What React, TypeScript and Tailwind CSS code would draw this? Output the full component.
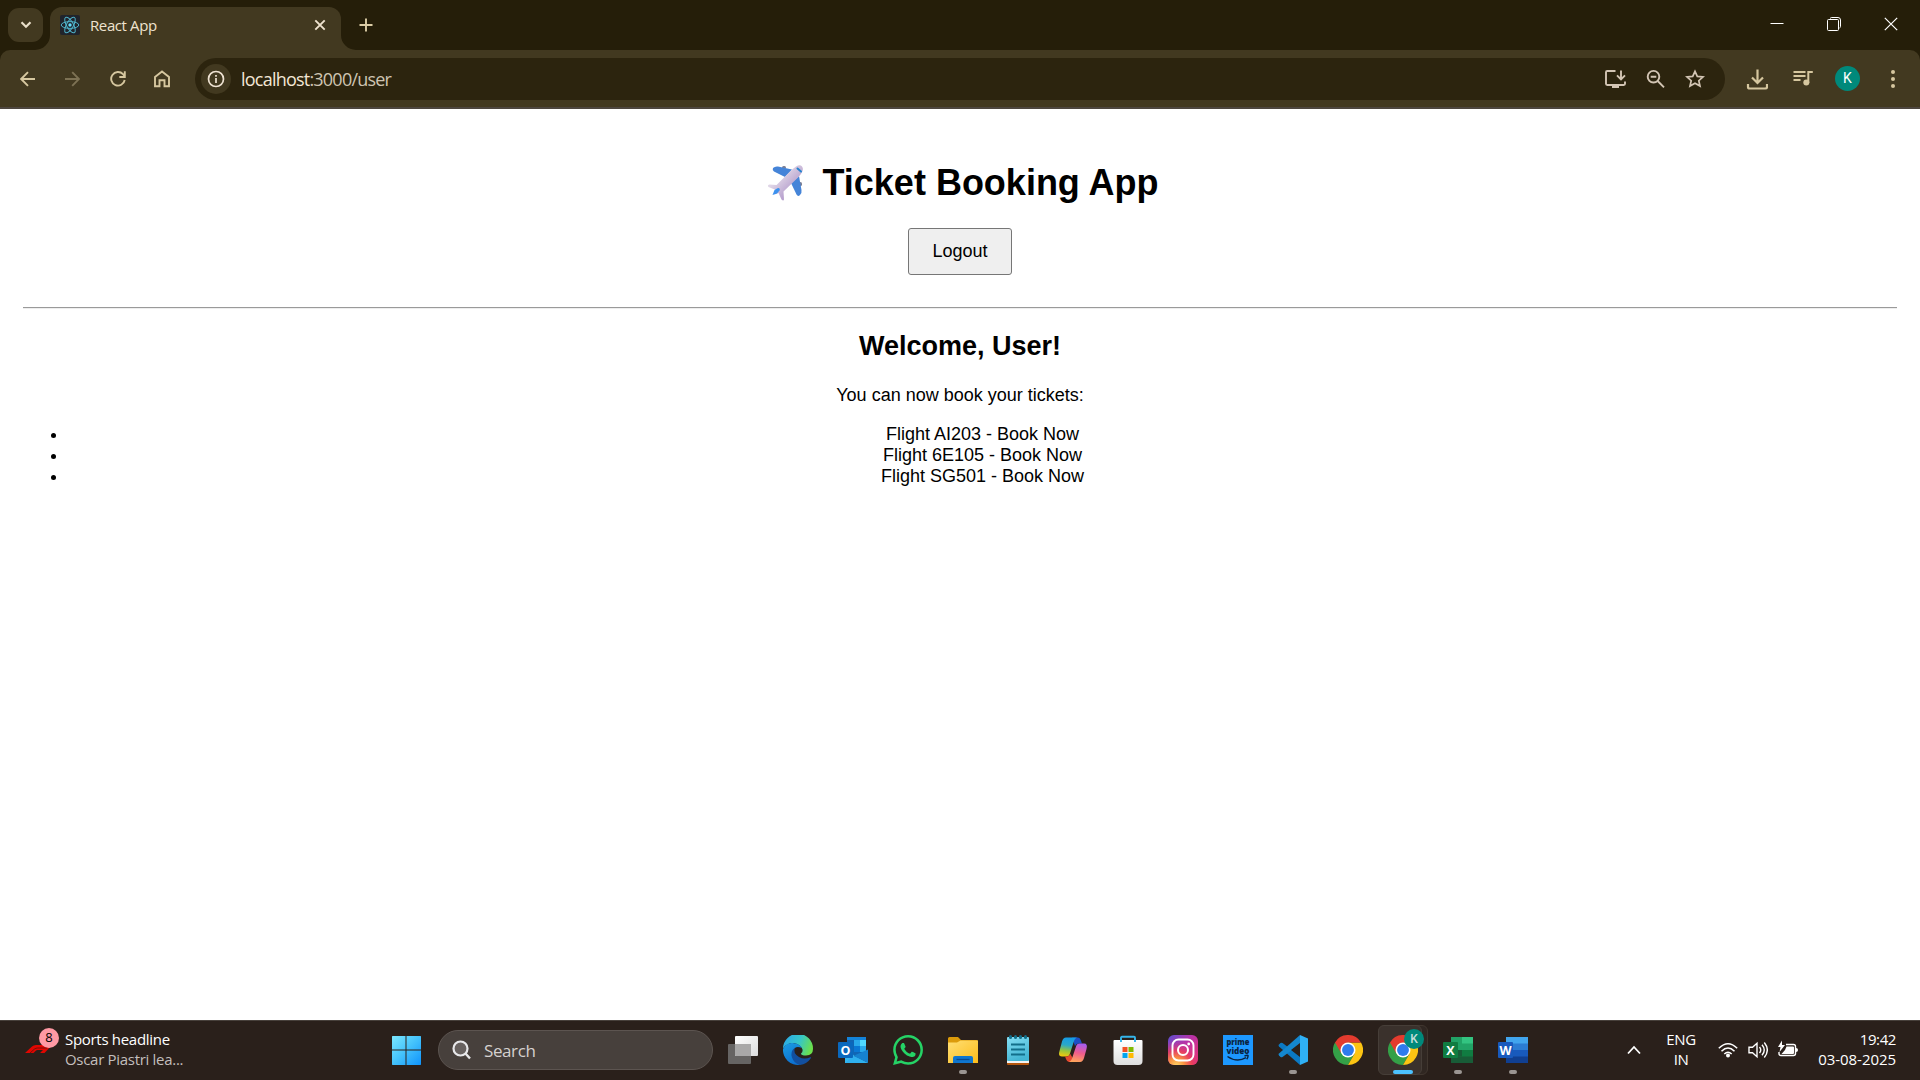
import React from "react";

const segoe = "font-['Open_Sans','Noto_Sans',sans-serif]";

function Svg({ size, children, vb, className = "" }: { size: number; vb?: string; className?: string; children: React.ReactNode }) {
  return (
    <svg width={size} height={size} viewBox={vb ?? "0 0 24 24"} fill="none" className={"block shrink-0 " + className}>
      {children}
    </svg>
  );
}

function ReactLogo() {
  return (
    <Svg size={20} vb="0 0 20 20" className="rounded-[2px] bg-[#20242c]">
      <g stroke="#4fb3ca" strokeWidth="1">
        <ellipse cx="10" cy="10" rx="8.8" ry="3.4" />
        <ellipse cx="10" cy="10" rx="8.8" ry="3.4" transform="rotate(60 10 10)" />
        <ellipse cx="10" cy="10" rx="8.8" ry="3.4" transform="rotate(120 10 10)" />
      </g>
      <circle cx="10" cy="10" r="1.7" fill="#61dafb" />
    </Svg>
  );
}

function TabStrip() {
  return (
    <div className="flex h-[50px] items-stretch bg-[#251e09] pl-2">
      <div className="mt-2 flex h-[34px] w-[35px] items-center justify-center rounded-[11px] bg-[#423920]">
        <Svg size={12} vb="0 0 12 12">
          <path d="M1.500 3.200 6 7.700l4.500-4.500" stroke="#e9dfc9" strokeWidth="2.200" />
        </Svg>
      </div>
      <div className="relative mt-[7px] ml-[7px] flex w-[291px] items-center rounded-t-[12px] bg-[#423920] pb-[1px] pl-[10px]">
        <svg width="15" height="15" className="absolute -left-[15px] bottom-0">
          <path d="M15 0V15H0A15 15 0 0 0 15 0Z" fill="#423920" />
        </svg>
        <svg width="15" height="15" className="absolute -right-[15px] bottom-0">
          <path d="M0 0V15H15A15 15 0 0 1 0 0Z" fill="#423920" />
        </svg>
        <div className="-mt-[6px]"><ReactLogo /></div>
        <div className={"-mt-[6px] ml-[10px] text-[15px] leading-5 tracking-[-0.4px] text-[#efe3cf] " + segoe}>React App</div>
        <div className="-mt-[6px] mr-[15px] ml-auto">
          <Svg size={12} vb="0 0 12 12">
            <path d="M1.300 1.300l9.400 9.400M10.700 1.300l-9.400 9.400" stroke="#efe3cf" strokeWidth="1.900" />
          </Svg>
        </div>
      </div>
      <div className="mt-[18px] ml-[18px]">
        <Svg size={14} vb="0 0 14 14">
          <path d="M7 .5v13M.5 7h13" stroke="#dccda6" strokeWidth="1.900" />
        </Svg>
      </div>
      <div className="ml-auto flex h-[50px] pr-px text-white">
        <div className="flex w-[56px] items-center justify-center pb-[2px]"><Svg size={14} vb="0 0 14 14"><path d="M.5 6.500h13" stroke="currentColor" /></Svg></div>
        <div className="flex w-[57px] items-center justify-center pb-[2px]">
          <Svg size={14} vb="0 0 14 14">
            <path d="M3.500 1.500V1Q3.500.500 4.500.500H11Q13.500.500 13.500 3v6.500q0 1-1 1.500" stroke="currentColor" />
            <rect x=".5" y="2.500" width="11" height="11" rx="1" stroke="currentColor" />
          </Svg>
        </div>
        <div className="flex w-[57px] items-center justify-center pb-[2px]"><Svg size={14} vb="0 0 14 14"><path d="M.8.8l12.400 12.400M13.200.8L.8 13.200" stroke="currentColor" strokeWidth="1.200" /></Svg></div>
      </div>
    </div>
  );
}

function Toolbar() {
  return (
    <div className="bg-[#251e09]">
      <div className="flex h-[57px] items-center rounded-t-[10px] bg-[#423920] text-[#d6c79f]">
        <div className="flex w-[195px] items-center pl-[20px]">
          <Svg size={16} vb="0 0 16 16"><path d="M15 8H2M8 1.200 1.200 8 8 14.800" stroke="currentColor" strokeWidth="1.900" /></Svg>
          <Svg size={16} vb="0 0 16 16" className="ml-[28px] text-[#7d7254]"><path d="M1 8H14.500M8.200 1.200 15 8l-6.800 6.800" stroke="currentColor" strokeWidth="1.900" /></Svg>
          <Svg size={16} vb="0 0 16 16" className="ml-[30px]">
            <path d="M14.700 9A6.800 6.800 0 1 1 13 3.200L14.500 5" stroke="currentColor" strokeWidth="1.900" />
            <path d="M14.800.3V6H9.300" stroke="currentColor" strokeWidth="1.900" />
          </Svg>
          <Svg size={18} vb="0 0 18 18" className="ml-[27px]"><path d="M2 7 9 1.500 16 7v9.300h-4.500v-6h-5v6H2Z" stroke="currentColor" strokeWidth="1.900" /></Svg>
        </div>
        <div className="flex h-[42px] w-[1530px] items-center rounded-full bg-[#2c240e] pl-[6px] text-[#d3c5b4]">
          <div className="flex size-[30px] items-center justify-center rounded-full bg-[#423920] text-[#efe3d3]">
            <Svg size={18} vb="0 0 18 18"><circle cx="9" cy="9" r="7.500" stroke="currentColor" strokeWidth="1.700" /><path d="M9 8v5M9 5v1.800" stroke="currentColor" strokeWidth="1.700" /></Svg>
          </div>
          <div className={"ml-[10px] text-[18px] leading-6 tracking-[-0.78px] text-[#cfc4b2] " + segoe}><span className="text-[#f3e7d5]">localhost</span>:3000/user</div>
          <div className="mr-[20px] ml-auto flex items-center">
            <Svg size={22} vb="0 0 22 22">
              <path d="M11.500 3H3.200Q2 3 2 4.200v11.600Q2 17 3.200 17h16.600q1.200 0 1.200-1.200V13.500" stroke="currentColor" strokeWidth="1.900" />
              <path d="M17 2.500v8M13 7.300l4 4 4-4" stroke="currentColor" strokeWidth="1.900" />
              <path d="M8 17h7v3H8Z" fill="currentColor" />
            </Svg>
            <Svg size={20} vb="0 0 20 20" className="ml-[20px]"><circle cx="7.500" cy="7.700" r="5.800" stroke="currentColor" strokeWidth="1.900" /><path d="M4.700 7.700h5.600M11.700 12l6.300 6.300" stroke="currentColor" strokeWidth="1.900" /></Svg>
            <Svg size={20} vb="0 0 20 20" className="ml-[19px]"><path d="m10 2.300 2.300 5.100 5.700.6-4.200 3.700 1.200 5.400-5-2.900-5 2.900 1.200-5.400L2 8l5.700-.6Z" stroke="currentColor" strokeWidth="1.700" /></Svg>
          </div>
        </div>
        <Svg size={22} vb="0 0 22 22" className="ml-[21px]"><path d="M11.500 1.500V14.500M6 9.500l5.500 5.500L17 9.500M2 16v3Q2 20.500 3.700 20.500h15.600q1.700 0 1.700-1.500V16" stroke="currentColor" strokeWidth="2.200" /></Svg>
        <Svg size={20} vb="0 0 20 20" className="ml-[25px]"><path d="M.5 3h12M.5 7h12M.5 11h7M15.300 14V3h4.500" stroke="currentColor" strokeWidth="2" /><circle cx="13.300" cy="13.500" r="3" fill="currentColor" /></Svg>
        <div className="ml-[22px] flex size-[25px] items-center justify-center rounded-full bg-[#00897b] font-[Roboto,sans-serif] text-[14px] text-white">K</div>
        <Svg size={20} vb="0 0 20 20" className="ml-[23px]"><g fill="currentColor"><circle cx="10" cy="3" r="2" /><circle cx="10" cy="10" r="2" /><circle cx="10" cy="17" r="2" /></g></Svg>
      </div>
      <div className="h-[2px] bg-[#4d463f]" />
    </div>
  );
}

function Airplane() {
  return (
    <svg width="37" height="37" viewBox="0 0 37 37" className="block">
      <defs>
        <linearGradient id="fus" x1=".35" y1=".3" x2=".7" y2=".65"><stop stopColor="#dfd5e6" /><stop offset="1" stopColor="#b9a3cf" /></linearGradient>
      </defs>
      <g fill="#7d7f92"><rect x="15" y="2" width="4" height="3" rx="1.500" /><rect x="32" y="18" width="3" height="4" rx="1.500" /></g>
      <path d="M6 4q2-2 5-1.500L25 5.500l-7 7.500L7 7.500Q5 6 6 4Z" fill="#4584d8" />
      <path d="M33 31q2-2 1.500-5L32 12l-8 7 5.500 11.500Q31 33 33 31Z" fill="#4584d8" />
      <path d="M29 2.500q4-2.500 6 0 2 2.500-.5 6.500-1 2-4 5L16.500 27.500l.5 8q-.5 2-2.500 0l-3-6.500-4 1.500L9 26 1.500 23q-1.500-2 1-2.500l7 .5L22.500 8Q26 4.500 29 2.500Z" fill="url(#fus)" />
      <path d="m5.500 31 2-5 3.500-2q2.500 0 1.500 2.500L10 29.500Z" fill="#3c91ee" />
      <path d="m30.500 4.500 3.500 3" stroke="#2584cf" strokeWidth="2" strokeLinecap="round" />
    </svg>
  );
}

function Page() {
  return (
    <div className="flex h-[911px] flex-col items-center bg-white px-[23px] font-['Liberation_Sans',Arial,sans-serif] text-[18px] leading-[21px] text-black">
      <h1 className="mt-[53px] flex h-[42px] items-center pl-[6px] text-[36px] leading-[42px] font-bold">
        <span className="-mt-[2px] mr-[18px]"><Airplane /></span>
        Ticket Booking App
      </h1>
      <button className="mt-[24px] h-[47px] w-[104px] rounded-[3px] border border-[#767676] bg-[#efefef] text-[18px]">Logout</button>
      <hr className="mt-[32px] h-[2px] w-full border-t border-b border-t-[#9a9a9a] border-b-[#eeeeee]" />
      <h2 className="mt-[22px] text-[27px] leading-[31px] font-bold">Welcome, User!</h2>
      <p className="mt-[23px]">You can now book your tickets:</p>
      <ul className="mt-[18px] w-full list-disc pl-[45px] text-center">
        <li>Flight AI203 - Book Now</li>
        <li>Flight 6E105 - Book Now</li>
        <li>Flight SG501 - Book Now</li>
      </ul>
    </div>
  );
}

function ChromeLogo() {
  return (
    <Svg size={30} vb="0 0 48 48">
      <path d="M3.200 12A24 24 0 0 0 24 48l10.400-18H24Z" fill="#34a047" />
      <path d="M24 12h20.800A24 24 0 0 1 24 48l10.400-18Z" fill="#fcc413" />
      <path d="M3.200 12 13.600 30 24 36 30 26 14 16Z" fill="#34a047" />
      <path d="M3.200 12A24 24 0 0 1 44.800 12H24L13.600 18v12Z" fill="#e33b2e" />
      <circle cx="24" cy="24" r="12" fill="#fff" />
      <circle cx="24" cy="24" r="9.500" fill="#2f7bed" />
    </Svg>
  );
}

function Office({ letter, colors, tile }: { letter: string; colors: string[]; tile: string }) {
  return (
    <Svg size={30} vb="0 0 30 30">
      <rect x="8" y="2" width="22" height="7" fill={colors[0]} />
      <rect x="8" y="8.500" width="22" height="7" fill={colors[1]} />
      <rect x="8" y="15" width="22" height="7" fill={colors[2]} />
      <rect x="8" y="21.500" width="22" height="6.500" fill={colors[3]} />
      {letter === "X" && <path d="M19 2h11v6.500H19Z" fill="#33c481" />}
      {letter === "X" && <path d="M8 15h11v6.500H8Z" fill="#185c37" />}
      <rect y="7" width="15" height="16" rx="1" fill={tile} />
      <text x="7.500" y="19.500" textAnchor="middle" fontSize="12.500" fontWeight="700" fill="#fff" className={segoe}>{letter}</text>
    </Svg>
  );
}

const apps: { icon: React.ReactNode; running?: boolean; active?: boolean }[] = [
  {
    icon: (
      <Svg size={30} vb="0 0 30 30">
        <defs><linearGradient id="tv" x1="0" y1="0" x2="1" y2="1"><stop stopColor="#fff" /><stop offset="1" stopColor="#dcdcdc" /></linearGradient></defs>
        <rect y="9" width="23" height="20" rx="1" fill="#666463" />
        <rect x="7" y="1" width="23" height="20" rx="1" fill="url(#tv)" />
        <path d="M7 9h16v12H8q-1 0-1-1Z" fill="#a9a8a8" />
      </Svg>
    ),
  },
  {
    icon: (
      <Svg size={30} vb="0 0 30 30">
        <defs>
          <linearGradient id="eg" x1="0" y1=".2" x2="1" y2=".5"><stop stopColor="#2aa7e8" /><stop offset=".55" stopColor="#36c6c8" /><stop offset="1" stopColor="#6be04b" /></linearGradient>
          <linearGradient id="eb" x1="0" y1="0" x2=".5" y2="1"><stop stopColor="#1b9de2" /><stop offset="1" stopColor="#0c6fd0" /></linearGradient>
        </defs>
        <path d="M0 13.500A15 15 0 0 1 30 14q0 6-7 6.500-5 0-5-2 2-1.500 1.500-4Q18 9.500 11 8 4 7.500 0 13.500Z" fill="url(#eg)" />
        <path d="M0 14Q3 7.500 9.500 8q7 .5 9.500 5-7-3-9 3-1.500 8 7 13.800A15 15 0 0 1 0 14Z" fill="url(#eb)" />
        <path d="M12 12.500q-5 4-3 10Q11 28.500 17 30q7-1 11-7 .5-1-.7-.7-6 2.700-11.300-.3-6.500-4-4-9.500Z" fill="#124f9f" />
      </Svg>
    ),
  },
  {
    icon: (
      <Svg size={30} vb="0 0 30 30">
        <rect x="9" y="2" width="19" height="18" rx="1" fill="#1066b5" />
        <path d="M16 5h6v6h-6Z" fill="#28a8ea" /><path d="M22 5h6v6h-6Z" fill="#50d9ff" /><path d="M16 11h6v6h-6Z" fill="#0a78d4" /><path d="M22 11h6v6h-6Z" fill="#28a8ea" /><path d="M9 2h19v3H9Z" fill="#1383d9" />
        <path d="M7 28h22.500L7 15Z" fill="#35b8f1" /><path d="M30 14.500V28L15 21Z" fill="#1682cf" /><path d="m7 28 8-7 15 7Z" fill="#2fb0ee" />
        <rect y="7" width="15" height="16" rx="1" fill="#0a68bd" />
        <text x="7.500" y="19.500" textAnchor="middle" fontSize="12.500" fontWeight="700" fill="#fff" className={segoe}>O</text>
      </Svg>
    ),
  },
  {
    icon: (
      <Svg size={30} vb="0 0 24 24">
        <path fill="#25d366" d="M17.472 14.382c-.297-.149-1.758-.867-2.030-.967-.273-.099-.471-.148-.67.150-.197.297-.767.966-.94 1.164-.173.199-.347.223-.644.075-.297-.150-1.255-.463-2.390-1.475-.883-.788-1.480-1.761-1.653-2.059-.173-.297-.018-.458.130-.606.134-.133.298-.347.446-.520.149-.174.198-.298.298-.497.099-.198.050-.371-.025-.520-.075-.149-.669-1.612-.916-2.207-.242-.579-.487-.500-.669-.510-.173-.008-.371-.010-.570-.010-.198 0-.520.074-.792.372-.272.297-1.040 1.016-1.040 2.479 0 1.462 1.065 2.875 1.213 3.074.149.198 2.096 3.200 5.077 4.487.709.306 1.262.489 1.694.625.712.227 1.360.195 1.871.118.571-.085 1.758-.719 2.006-1.413.248-.694.248-1.289.173-1.413-.074-.124-.272-.198-.570-.347m-5.421 7.403h-.004a9.870 9.870 0 01-5.031-1.378l-.361-.214-3.741.982.998-3.648-.235-.374a9.860 9.860 0 01-1.510-5.260c.001-5.450 4.436-9.884 9.888-9.884 2.640 0 5.122 1.030 6.988 2.898a9.825 9.825 0 012.893 6.994c-.003 5.450-4.437 9.884-9.885 9.884m8.413-18.297A11.815 11.815 0 0012.050 0C5.495 0 .160 5.335.157 11.892c0 2.096.547 4.142 1.588 5.945L.057 24l6.305-1.654a11.882 11.882 0 005.683 1.448h.005c6.554 0 11.890-5.335 11.893-11.893a11.821 11.821 0 00-3.480-8.413Z" />
      </Svg>
    ),
  },
  {
    running: true,
    icon: (
      <Svg size={30} vb="0 0 30 30">
        <defs><linearGradient id="fo" x1="0" y1="0" x2="1" y2="1"><stop stopColor="#ffdf74" /><stop offset="1" stopColor="#fcbc1a" /></linearGradient></defs>
        <path d="M0 3.500Q0 2 1.500 2H10l3 3h15.500Q30 5 30 6.500V12H0Z" fill="#dc9b0b" />
        <path d="M0 7.500h9L12.500 5.500H30V28H0Z" fill="url(#fo)" />
        <path d="M5 28v-5q0-2 2-2h16q2 0 2 2v5Z" fill="#0f76cf" /><path d="M8.500 24.500h13" stroke="#0a4a91" strokeWidth="1.300" />
      </Svg>
    ),
  },
  {
    icon: (
      <Svg size={30} vb="0 0 30 30">
        <defs><linearGradient id="no" x1="0" y1="0" x2=".4" y2="1"><stop stopColor="#84def4" /><stop offset="1" stopColor="#43b5d3" /></linearGradient></defs>
        <rect x="4" y="24" width="22" height="6" rx="1" fill="#b5560d" /><rect x="4" y="23" width="22" height="5" fill="#f2f2f2" />
        <rect x="4" y="2" width="22" height="24" rx="1" fill="url(#no)" />
        <path d="M8 9.500h14M8 14.500h14M8 19.500h14" stroke="#126e8a" strokeWidth="1.800" />
        <g fill="#126e8a"><rect x="6" y="0" width="3" height="4" rx="1.500" /><rect x="11" y="0" width="3" height="4" rx="1.500" /><rect x="16" y="0" width="3" height="4" rx="1.500" /><rect x="21" y="0" width="3" height="4" rx="1.500" /></g>
      </Svg>
    ),
  },
  {
    icon: (
      <Svg size={30} vb="0 0 30 30">
        <defs>
          <linearGradient id="c1" x1=".5" y1="0" x2=".35" y2="1"><stop stopColor="#159be6" /><stop offset=".4" stopColor="#2aa8c9" /><stop offset=".7" stopColor="#95c43f" /><stop offset="1" stopColor="#f1c70c" /></linearGradient>
          <linearGradient id="c2" x1=".6" y1="0" x2=".4" y2="1"><stop stopColor="#a55cf0" /><stop offset=".5" stopColor="#ef5c8c" /><stop offset="1" stopColor="#ffa45b" /></linearGradient>
        </defs>
        <path d="M14 2.500h6q2 0 2.700 2.500L24 8.500h-3.500q-2.500 0-3.500 2.500Z" fill="#1b4fc6" />
        <path d="M8 2.500h11q-2.500 1-3.500 5l-3.500 11q-.8 3-3.500 3H4Q-.2 21.500 1.500 16L4 6.500Q5.200 2.500 8 2.500Z" fill="url(#c1)" />
        <path d="M7 21.500h2q2.500 0 3-3l3 5-2 3.500h-2q-2 0-3-3Z" fill="#e6482f" />
        <path d="M22 27H11q2.500-1 3.500-5L18 11.500q.8-3 3.500-3H26q4 0 2.500 5.500L26 23q-1.200 4-4 4Z" fill="url(#c2)" />
      </Svg>
    ),
  },
  {
    icon: (
      <Svg size={30} vb="0 0 30 30">
        <defs><linearGradient id="ms" x1="0" y1="0" x2="0" y2="1"><stop stopColor="#fff" /><stop offset="1" stopColor="#dedede" /></linearGradient></defs>
        <path d="M.5 6q0-1 1-1h27q1 0 1 1v20q0 4-4 4h-21q-4 0-4-4Z" fill="url(#ms)" />
        <path d="M8 7V2.800q0-1 1-1h12q1 0 1 1V7" stroke="#35b5ea" strokeWidth="1.900" />
        <path d="M9.500 12h5v5h-5Z" fill="#f25022" /><path d="M15.500 12h5v5h-5Z" fill="#7fba00" /><path d="M9.500 18h5v5h-5Z" fill="#00a4ef" /><path d="M15.500 18h5v5h-5Z" fill="#ffb900" />
      </Svg>
    ),
  },
  {
    icon: (
      <Svg size={30} vb="0 0 30 30">
        <defs>
          <linearGradient id="i1" x1="0" y1="0" x2="1" y2=".8"><stop stopColor="#5d4fd0" /><stop offset=".5" stopColor="#b832a8" /><stop offset="1" stopColor="#e23074" /></linearGradient>
          <radialGradient id="i2" cx=".28" cy="1.050" r=".9"><stop stopColor="#fddc6c" /><stop offset=".3" stopColor="#fb9440" /><stop offset=".6" stopColor="#ee3f55" stopOpacity=".8" /><stop offset="1" stopColor="#c837ab" stopOpacity="0" /></radialGradient>
        </defs>
        <rect width="30" height="30" rx="6" fill="url(#i1)" /><rect width="30" height="30" rx="6" fill="url(#i2)" />
        <rect x="4.500" y="4.500" width="21" height="21" rx="6" stroke="#fff" strokeWidth="1.900" /><circle cx="15" cy="15" r="5" stroke="#fff" strokeWidth="2" /><circle cx="20.700" cy="9" r="1.400" fill="#fff" />
      </Svg>
    ),
  },
  {
    icon: (
      <Svg size={30} vb="0 0 30 30">
        <rect width="30" height="30" fill="#1d98ff" />
        <g className="font-['Open_Sans',sans-serif]" fontSize="9" fontWeight="800" fill="#0b2440" textAnchor="middle">
          <text x="15" y="10" textLength="23" lengthAdjust="spacingAndGlyphs">prime</text>
          <text x="15" y="18.500" textLength="23" lengthAdjust="spacingAndGlyphs">video</text>
        </g>
        <path d="M4.500 21.500q9.500 6.500 18.500 1.200M21.500 21q4-1.500 3.500.2-.2 2-1.300 3" stroke="#0b2440" strokeWidth="1.500" />
      </Svg>
    ),
  },
  {
    running: true,
    icon: (
      <Svg size={30} vb="0 0 30 30">
        <path d="M22 30 1 11.500q-1-1 0-2l1.500-1.500q1-.7 2 0L24 22.500Z" fill="#0b79c4" />
        <path d="M22 0 1 18.500q-1 1 0 2L2.500 22q1 .7 2 0L24 7.500Z" fill="#1487cf" />
        <path d="M22 0 30 3.500v23L22 30V0Z" fill="#2fb0f5" />
        <path d="M22 8v14l-9-7Z" fill="#2b211b" />
      </Svg>
    ),
  },
  { icon: <ChromeLogo /> },
  { active: true, icon: <ChromeLogo /> },
  { running: true, icon: <Office letter="X" tile="#107c41" colors={["#21a366", "#21a366", "#107c41", "#185c37"]} /> },
  { running: true, icon: <Office letter="W" tile="#185abd" colors={["#41a5ee", "#2b7cd3", "#185abd", "#103f91"]} /> },
];

function Taskbar() {
  return (
    <div className={"flex h-[60px] items-stretch border-t border-[#47403b] bg-[#2a201b] " + segoe}>
      <div className="flex w-[391px] pl-[25px]">
        <div className="relative w-[34px]">
          <svg width="27" height="8" className="absolute top-[24px] left-0"><path fillRule="evenodd" d="M0 8 7 1.500Q8.500 0 11 0h16l-7.500 8H15l3-3h-5.500q-1 0-2 1L8.500 8Z" fill="#e10600" /><path d="M5 8 9.500 4Q11 3 12.500 3H22" stroke="#5a120c" fill="none" strokeWidth=".8" /></svg>
          <div className="absolute top-[7px] left-[14px] flex size-[20px] items-center justify-center rounded-full bg-[#ff99a4] text-[13px] text-black">8</div>
        </div>
        <div className="mt-[8px] ml-[6px] text-[15px] leading-[20px] tracking-[-0.3px] text-white">
          <div>Sports headline</div>
          <div className="text-[#c3bfbd]">Oscar Piastri lea...</div>
        </div>
      </div>
      <div className="flex items-center pb-px">
        <Svg size={30} vb="0 0 30 30">
          <defs><linearGradient id="win" gradientUnits="userSpaceOnUse" x1="0" y1="0" x2="30" y2="30"><stop stopColor="#7feaff" /><stop offset=".5" stopColor="#45c3fb" /><stop offset="1" stopColor="#0f93fc" /></linearGradient></defs>
          <path d="M1.500 1H14.500V14.500H1V1.500ZM15.500 1H29.500L30 1.500V14.500H15.500ZM1 15.500H14.500V30H1.500L1 29.500ZM15.500 15.500H30V29.500L29.500 30H15.500Z" fill="url(#win)" />
        </Svg>
        <div className="ml-[17px] flex h-[40px] w-[275px] items-center rounded-full border border-[#5c5450] bg-[#47403c] pl-[13px] text-[#d5d1cf]">
          <Svg size={20} vb="0 0 20 20"><circle cx="8.500" cy="8.500" r="7" fill="#67615f" stroke="#e8e8ea" strokeWidth="2.200" /><path d="m13.500 13.500 4.500 5" stroke="#e8e8ea" strokeWidth="2.400" /></Svg>
          <span className="mt-px ml-[12px] text-[17px] tracking-[-0.4px]">Search</span>
        </div>
      </div>
      <div className="ml-[2px] flex">
        {apps.map((a, i) => (
          <div key={i} className="relative flex w-[55px] items-center justify-center pb-px">
            {a.active && (
              <>
                <div className="absolute top-[4px] left-[8px] h-[50px] w-[45px] rounded-[6px] border border-[#40362f] bg-[#302722]" />
                <div className="absolute top-[4px] left-[3px] h-[50px] w-[44px] rounded-[6px] border border-[#463e38] bg-[#3a312c]" />
              </>
            )}
            <div className="relative">{a.icon}</div>
            {a.active && (
              <div className="absolute top-[8px] left-[29px] flex size-[20px] items-center justify-center rounded-full bg-[#00897b] font-[Roboto,sans-serif] text-[12px] font-medium text-[#c7dfdc]">K</div>
            )}
            {a.running && <div className="absolute bottom-[6px] h-[4px] w-[8px] rounded-full bg-[#9b9592]" />}
            {a.active && <div className="absolute bottom-[6px] h-[4px] w-[20px] rounded-full bg-[#4cc2ff]" />}
          </div>
        ))}
      </div>
      <div className="ml-auto flex items-center pr-[24px] pb-[2px] text-[15px] leading-[20px] tracking-[-0.4px] text-white">
        <Svg size={14} vb="0 0 14 14"><path d="m1 10.500 6-6.500 6 6.500" stroke="currentColor" strokeWidth="1.800" /></Svg>
        <div className="-mt-px ml-[24px] w-[32px] text-center"><div>ENG</div><div>IN</div></div>
        <Svg size={20} vb="0 0 20 20" className="ml-[21px]"><g stroke="currentColor" strokeWidth="1.500"><path d="M.8 8.300q9.200-9 18.400 0M3.500 11.300q6.500-6.500 13 0M6.300 14q3.700-3.500 7.400 0" /></g><circle cx="10" cy="15.500" r="2" fill="currentColor" /></Svg>
        <Svg size={20} vb="0 0 20 20" className="ml-[10px]"><g stroke="currentColor" strokeWidth="1.400"><path d="M1 7.200h3.500L9 3.200v13.600L4.500 12.800H1ZM11.500 7q2.500 3 0 6M14 4.700q4.500 5.300 0 10.600M16.300 2.500q6 7.500 0 15" /></g></Svg>
        <Svg size={20} vb="0 0 20 20" className="ml-[10px]"><path d="M8 4.500h7.500q2 0 2 2v7q0 2-2 2H3q-2 0-2-2V12" stroke="currentColor" strokeWidth="1.400" /><path d="M8.500 6.500H15q1 0 1 1v5.500q0 1-1 1H3.500L7 10Z" fill="currentColor" /><path d="M18 8q2 0 2 2t-2 2Z" fill="currentColor" /><path d="M4 .5 0 7h2.500L1.500 12 7 5H4Z" fill="currentColor" /></Svg>
        <div className="-mt-px w-[98px] text-right"><div>19:42</div><div className="tracking-[-0.05px]">03-08-2025</div></div>
      </div>
    </div>
  );
}

export default function App() {
  return (
    <div className="flex h-[1080px] w-[1920px] flex-col overflow-hidden bg-white">
      <TabStrip />
      <Toolbar />
      <Page />
      <Taskbar />
    </div>
  );
}
